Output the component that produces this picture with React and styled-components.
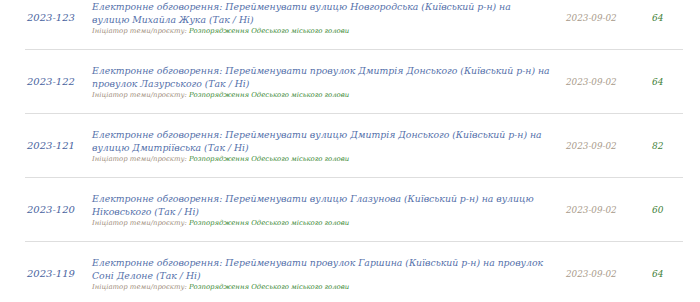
import React from 'react';
import styled, { createGlobalStyle } from 'styled-components';

const GlobalStyle = createGlobalStyle`
    body {
        margin: 0;
        background: #ffffff;
        font-family: "DejaVu Serif", serif;
        overflow: hidden;
    }
`;

const List = styled.div`
    margin-top: -14px;
    padding-left: 25px;
    width: 658px;
`;

const Row = styled.div`
    display: grid;
    grid-template-columns: 67px 474px 86px 1fr;
    align-items: center;
    height: 64px;
    box-sizing: border-box;
    border-bottom: 1px solid #dedede;
    font-style: italic;
`;

const Num = styled.div`
    padding-left: 2px;
    font-size: 10px;
    color: #4a64a0;
`;

const Info = styled.div`
    padding-right: 14px;
    padding-top: 1px;
`;

const Title = styled.div`
    font-size: 9.3px;
    line-height: 13px;
    color: #5470aa;
`;

const TitleLine = styled.span`
    display: block;
    white-space: nowrap;
`;

const Initiator = styled.div`
    font-size: 6.9px;
    line-height: 11px;
    color: #a08e7c;
`;

const Source = styled.span`
    color: #3c8a36;
`;

const DateCell = styled.div`
    font-size: 8.8px;
    color: #a89a8a;
`;

const Count = styled.div`
    font-size: 9px;
    color: #3f7f3a;
`;

const rows = [
    { id: '2023-123', title: ['Електронне обговорення: Перейменувати вулицю Новгородська (Київський р-н) на', 'вулицю Михайла Жука (Так / Ні)'], date: '2023-09-02', count: 64 },
    { id: '2023-122', title: ['Електронне обговорення: Перейменувати провулок Дмитрія Донського (Київський р-н) на', 'провулок Лазурського (Так / Ні)'], date: '2023-09-02', count: 64 },
    { id: '2023-121', title: ['Електронне обговорення: Перейменувати вулицю Дмитрія Донського (Київський р-н) на', 'вулицю Дмитріївська (Так / Ні)'], date: '2023-09-02', count: 82 },
    { id: '2023-120', title: ['Електронне обговорення: Перейменувати вулицю Глазунова (Київський р-н) на вулицю', 'Ніковського (Так / Ні)'], date: '2023-09-02', count: 60 },
    { id: '2023-119', title: ['Електронне обговорення: Перейменувати провулок Гаршина (Київський р-н) на провулок', 'Соні Делоне (Так / Ні)'], date: '2023-09-02', count: 64 },
];

const App = () => (
    <>
        <GlobalStyle />
        <List>
            {rows.map((r) => (
                <Row key={r.id}>
                    <Num>{r.id}</Num>
                    <Info>
                        <Title>
                            {r.title.map((line) => (
                                <TitleLine key={line}>{line}</TitleLine>
                            ))}
                        </Title>
                        <Initiator>
                            Ініціатор теми/проєкту: <Source>Розпорядження Одеського міського голови</Source>
                        </Initiator>
                    </Info>
                    <DateCell>{r.date}</DateCell>
                    <Count>{r.count}</Count>
                </Row>
            ))}
        </List>
    </>
);

export default App;
